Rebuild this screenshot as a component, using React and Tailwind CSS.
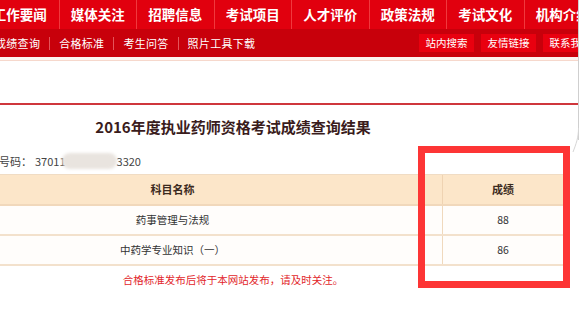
import React from "react";

const TOP_NAV = ["工作要闻", "媒体关注", "招聘信息", "考试项目", "人才评价", "政策法规", "考试文化", "机构介绍"];
const SUB_NAV = ["成绩查询", "合格标准", "考生问答", "照片工具下载"];
const SUB_BTNS = ["站内搜索", "友情链接", "联系我们"];

const SCORES = [
  { name: "药事管理与法规", score: "88" },
  { name: "中药学专业知识（一）", score: "86" },
];

const App = () => {
  return (
    <div className="relative w-[582px] h-[331px] overflow-hidden bg-white font-['Noto_Sans_CJK_SC','Noto_Sans',sans-serif]">
      <div className="w-[578px] h-full overflow-hidden">
        {/* main nav */}
        <div className="flex h-[29px] bg-[#e1000e] -ml-[19px]">
          {TOP_NAV.map((item, i) => (
            <div
              key={item}
              className={
                "shrink-0 w-[77.5px] flex items-center justify-center text-white font-bold text-[13.5px] " +
                (i > 0 ? "border-l border-[#f0393d]" : "")
              }
            >
              {item}
            </div>
          ))}
        </div>

        {/* sub nav */}
        <div className="flex items-center justify-between h-[28px] bg-[#c8000b]">
          <div className="flex items-center -ml-[5px] text-white text-[11px] tracking-[0.3px]">
            {SUB_NAV.map((item, i) => (
              <div key={item} className="flex items-center">
                {i > 0 && <span className="mx-[9px] h-[13px] w-px bg-[#e4545a]" />}
                <span>{item}</span>
              </div>
            ))}
          </div>
          <div className="flex items-center gap-[7px] -mr-[20px] shrink-0">
            {SUB_BTNS.map((item) => (
              <div
                key={item}
                className="w-[55px] h-[18px] flex items-center justify-center bg-[#e9000f] text-white text-[10.5px]"
              >
                {item}
              </div>
            ))}
          </div>
        </div>

        <div className="h-[3px] bg-[#fdf3ef]" />
        <div className="h-px bg-[#f6d8cc]" />
        <div className="h-[42px]" />
        <div className="h-[2px] bg-[#cf363c]" />

        {/* result */}
        <div className="-ml-[97px] w-[660px]">
          <div className="pt-[12px] text-center text-[15px] leading-[20px] font-bold text-[#3a1c1c]">
            2016年度执业药师资格考试成绩查询结果
          </div>

          <div className="mt-[15px] pl-[63px] flex items-center h-[18px] text-[11px] text-[#444]">
            <span>准考证号码：</span>
            <span className="ml-[3px]">37011</span>
            <span className="w-[55px] h-[16px] rounded-full bg-[#e9e4df] blur-[1.5px] -ml-[4px]" />
            <span>3320</span>
          </div>

          <div className="mt-[4px] border-t border-[#f0dcc4]">
            <div className="grid grid-cols-[540px_120px] h-[31px] bg-[#fce6c9] border-b-2 border-[#f1d8bb] text-[11px] font-bold text-[#3b2a20]">
              <div className="flex items-center justify-center border-r border-[#efd3b2]">科目名称</div>
              <div className="flex items-center justify-center">成绩</div>
            </div>
            {SCORES.map((row) => (
              <div
                key={row.name}
                className="grid grid-cols-[540px_120px] h-[30px] bg-[#fffdfb] border-b-2 border-[#f3e1cc] text-[10.5px] text-[#333]"
              >
                <div className="flex items-center justify-center border-r border-[#f0d9bd]">{row.name}</div>
                <div className="flex items-center justify-center">{row.score}</div>
              </div>
            ))}
          </div>

          <div className="mt-[6px] text-center text-[10.5px] leading-[16px] text-[#e2262b]">
            合格标准发布后将于本网站发布，请及时关注。
          </div>
        </div>
      </div>

      {/* screen edge */}
      <div className="absolute left-[578px] top-0 w-px h-[140px] bg-[#cfcfcf]" />
      <svg className="absolute left-[570px] top-[128px]" width="12" height="26" viewBox="0 0 12 26">
        <path d="M8.5 0 C8.5 10 6 16 3 24" stroke="#d6d6d6" strokeWidth="1" fill="none" />
      </svg>

      {/* highlight box */}
      <div className="absolute left-[418px] top-[146px] w-[152px] h-[142px] border-[7px] border-[#fd3535]" />
    </div>
  );
};

export default App;
